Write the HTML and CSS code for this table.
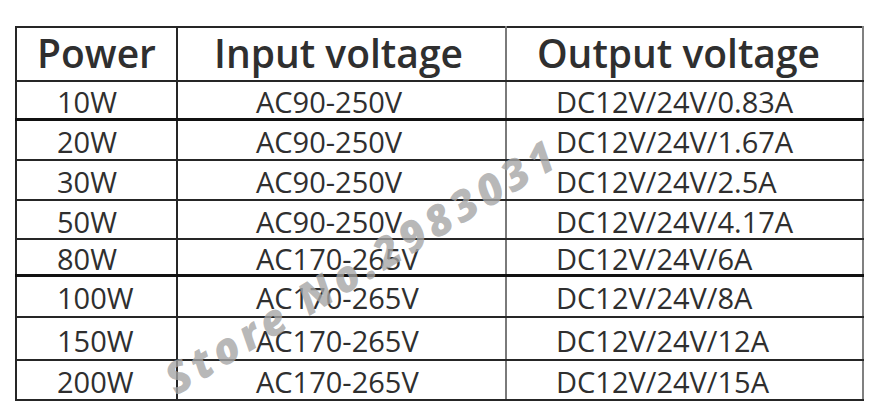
FILE: index.html
```html
<!DOCTYPE html>
<html lang="en">
<head>
<meta charset="utf-8">
<title>Power supply table</title>
<link rel="stylesheet" href="styles.css">
</head>
<body>
<div class="sheet">
  <table class="spec">
    <colgroup>
      <col class="c-power">
      <col class="c-input">
      <col class="c-output">
    </colgroup>
    <thead>
      <tr class="head">
        <th>Power</th>
        <th>Input voltage</th>
        <th class="last">Output voltage</th>
      </tr>
    </thead>
    <tbody>
      <tr class="h38 thick"><td>10W</td><td>AC90-250V</td><td class="last">DC12V/24V/0.83A</td></tr>
      <tr class="h41"><td>20W</td><td>AC90-250V</td><td class="last">DC12V/24V/1.67A</td></tr>
      <tr class="h40"><td>30W</td><td>AC90-250V</td><td class="last">DC12V/24V/2.5A</td></tr>
      <tr class="h39"><td>50W</td><td>AC90-250V</td><td class="last">DC12V/24V/4.17A</td></tr>
      <tr class="h36 thick"><td>80W</td><td>AC170-265V</td><td class="last">DC12V/24V/6A</td></tr>
      <tr class="h42"><td>100W</td><td>AC170-265V</td><td class="last">DC12V/24V/8A</td></tr>
      <tr class="h43"><td>150W</td><td>AC170-265V</td><td class="last">DC12V/24V/12A</td></tr>
      <tr class="h40"><td>200W</td><td>AC170-265V</td><td class="last">DC12V/24V/15A</td></tr>
    </tbody>
  </table>
  <div class="watermark">Store No.2983031</div>
</div>
</body>
</html>
```

FILE: styles.css
```css
html, body {
  margin: 0;
  padding: 0;
  background: #ffffff;
}

body {
  width: 872px;
  height: 418px;
  overflow: hidden;
  font-family: "Open Sans", "Noto Sans", "Liberation Sans", sans-serif;
  color: #2f2f2f;
}

.sheet {
  position: relative;
  padding: 26px 0 0 15px;
}

.spec {
  border-collapse: collapse;
  table-layout: fixed;
  width: 847px;
}

.c-power { width: 161px; }
.c-input { width: 329px; }
.c-output { width: 357px; }

.spec th,
.spec td {
  border: 2px solid #262626;
  padding: 0;
  white-space: nowrap;
}

.spec th {
  font-size: 39px;
  font-weight: 600;
  text-align: center;
  line-height: 1;
  padding-bottom: 4px;
}

.spec td {
  font-size: 29px;
  font-weight: 400;
  line-height: 1;
  text-align: left;
  padding-top: 3px;
}

.spec td:nth-child(1) { padding-left: 40px; }
.spec td:nth-child(2) { padding-left: 78px; border-right-color: #7a7a7a; }
.spec td:nth-child(3) { padding-left: 49px; }

.spec th:nth-child(2) { border-right-color: #7a7a7a; padding-right: 6px; }
.spec th:nth-child(3) { padding-right: 12px; }

.spec .last { border-right-color: #808080; }

.head { height: 54px; }
.h36 { height: 36px; }
.h38 { height: 38px; }
.h39 { height: 39px; }
.h40 { height: 40px; }
.h41 { height: 41px; }
.h42 { height: 42px; }
.h43 { height: 43px; }

.thick td { border-bottom-width: 3px; border-bottom-color: #111; }

.watermark {
  position: absolute;
  left: 168px;
  top: 352px;
  transform-origin: 0 50%;
  transform: rotate(-31deg);
  font-family: "Open Sans", "Liberation Sans", sans-serif;
  font-size: 43px;
  font-weight: 800;
  font-style: italic;
  letter-spacing: 5px;
  color: rgba(165, 165, 165, 0.8);
  white-space: nowrap;
  pointer-events: none;
}
```
